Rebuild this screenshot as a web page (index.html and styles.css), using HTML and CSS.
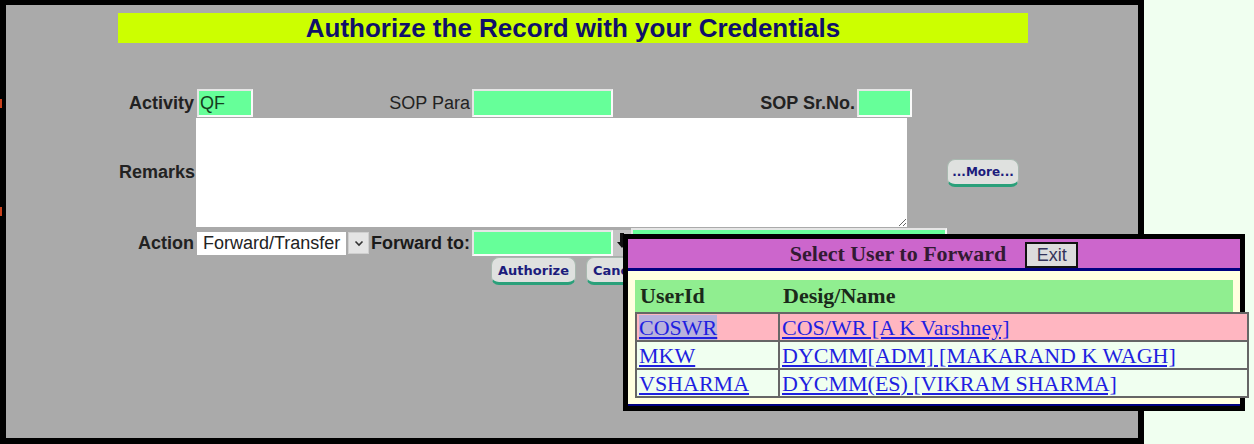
FILE: index.html
```html
<!DOCTYPE html>
<html>
<head>
<meta charset="utf-8">
<link rel="stylesheet" href="styles.css">
</head>
<body>
<div class="panel">
  <div class="title">Authorize the Record with your Credentials</div>
  <div class="form">
    <div class="row row1">
      <label class="lbl lbl-act bold">Activity</label>
      <input class="fld fld-act" type="text" value="QF">
      <label class="lbl lbl-para">SOP Para</label>
      <input class="fld fld-para" type="text">
      <label class="lbl lbl-srno bold">SOP Sr.No.</label>
      <input class="fld fld-srno" type="text">
    </div>
    <div class="row row2">
      <label class="lbl lbl-rem bold">Remarks</label>
      <textarea class="remarks"></textarea>
      <button class="btn btn-more">...More...</button>
    </div>
    <div class="row row3">
      <label class="lbl lbl-action bold">Action</label>
      <div class="select">
        <select class="sel-box"><option>Forward/Transfer</option></select>
        <span class="sel-arrow"><svg width="10" height="7" viewBox="0 0 10 7"><path d="M1.5 1.5 L5 5 L8.5 1.5" fill="none" stroke="#333" stroke-width="1.6"/></svg></span>
      </div>
      <label class="lbl lbl-fwd bold">Forward to:</label>
      <input class="fld fld-fwd" type="text">
      <span class="pick"><svg width="14" height="18" viewBox="0 0 14 18"><path d="M5 1 H9 V10 H12 L7 16 L2 10 H5 Z" fill="#111"/></svg></span>
      <input class="fld fld-fwdname" type="text">
    </div>
    <div class="row row4">
      <button class="btn btn-auth">Authorize</button>
      <button class="btn btn-cancel">Cancel</button>
    </div>
  </div>
</div>
<span class="mark mark1"></span>
<span class="mark mark2"></span>

<div class="popup">
  <div class="pop-hdr">
    <span class="pop-title">Select User to Forward</span>
    <button class="exit">Exit</button>
  </div>
  <div class="pop-body">
    <table class="hdr-table">
      <colgroup><col class="c1"><col></colgroup>
      <tr><th>UserId</th><th>Desig/Name</th></tr>
    </table>
    <table class="users">
      <colgroup><col class="c1"><col></colgroup>
      <tr class="sel-row"><td><a href="#" class="focused">COSWR</a></td><td><a href="#">COS/WR [A K Varshney]</a></td></tr>
      <tr><td><a href="#">MKW</a></td><td><a href="#">DYCMM[ADM] [MAKARAND K WAGH]</a></td></tr>
      <tr><td><a href="#">VSHARMA</a></td><td><a href="#">DYCMM(ES) [VIKRAM SHARMA]</a></td></tr>
    </table>
  </div>
</div>
</body>
</html>
```

FILE: styles.css
```css
html, body {
  margin: 0;
  padding: 0;
}
body {
  background: #f0fff0;
  font-family: "Liberation Sans", Arial, sans-serif;
  position: relative;
  width: 1254px;
  height: 444px;
  overflow: hidden;
}
.panel {
  width: 1144px;
  height: 444px;
  box-sizing: border-box;
  border-style: solid;
  border-color: #000;
  border-width: 5px 6px 6px 6px;
  background: #aaaaaa;
}
.title {
  margin: 8px 0 0 112px;
  width: 910px;
  height: 30px;
  line-height: 31px;
  background: #ccff00;
  color: #10106a;
  font-weight: bold;
  font-size: 26px;
  text-align: center;
}
.form {
  display: flex;
  flex-direction: column;
  margin-top: 46px;
}
.row {
  display: flex;
  align-items: center;
}
.lbl {
  box-sizing: border-box;
  text-align: right;
  font-size: 18px;
  color: #222;
  white-space: nowrap;
}
.bold { font-weight: bold; }
.fld {
  box-sizing: border-box;
  background: #66ff99;
  border: 2px solid #e6e6e6;
  border-right-color: #fafafa;
  border-bottom-color: #fafafa;
  font-family: "Liberation Sans", Arial, sans-serif;
  font-size: 18px;
  color: #143d20;
  padding: 0 0 0 1px;
  margin: 0;
  outline: none;
}
.row1 { height: 28px; }
.lbl-act { width: 191px; padding-right: 3px; }
.fld-act { width: 56px; height: 28px; }
.lbl-para { width: 219px; padding-right: 2px; }
.fld-para { width: 141px; height: 28px; }
.lbl-srno { width: 244px; padding-right: 2px; }
.fld-srno { width: 55px; height: 28px; }

.row2 { margin-top: 1px; }
.lbl-rem { width: 190px; padding-right: 1px; }
.remarks {
  width: 711px;
  height: 109px;
  box-sizing: border-box;
  border: 0;
  margin: 0;
  background: #fff;
  outline: none;
}
.btn {
  box-sizing: border-box;
  font-family: "DejaVu Sans", Verdana, sans-serif;
  font-weight: bold;
  color: #1c1c7c;
  background: #dfe1df;
  border: 1px solid #a9b9b0;
  border-bottom: 3px solid #2aa07a;
  border-radius: 8px;
  padding: 0;
  margin: 0;
}
.btn-more {
  margin-left: 40px;
  width: 72px;
  height: 28px;
  font-size: 12px;
}
.row3 { margin-top: 3px; height: 26px; }
.lbl-action { width: 191px; padding-right: 3px; }
.select {
  display: flex;
  align-items: center;
  width: 172px;
  height: 23px;
}
.sel-box {
  appearance: none;
  -webkit-appearance: none;
  width: 149px;
  height: 23px;
  border: 0;
  border-radius: 0;
  margin: 0;
  background: #fff;
  font-family: "Liberation Sans", Arial, sans-serif;
  font-size: 18px;
  color: #222;
  padding: 0 0 0 6px;
  outline: none;
}
.sel-arrow {
  margin-left: 2px;
  width: 21px;
  height: 22px;
  box-sizing: border-box;
  background: #e4e4e4;
  border: 1px solid #cfcfcf;
  display: flex;
  align-items: center;
  justify-content: center;
}
.lbl-fwd { width: 103px; padding-right: 2px; color: #1a1a1a; }
.fld-fwd { width: 141px; height: 26px; }
.pick {
  width: 18px;
  height: 26px;
  background: #c4c4c4;
  display: flex;
  align-items: flex-start;
  justify-content: center;
  padding-top: 2px;
  box-sizing: border-box;
}
.fld-fwdname { width: 316px; height: 28px; align-self: flex-start; margin-top: -2px; }
.row4 { margin-top: 1px; }
.btn-auth {
  margin-left: 485px;
  padding: 0 6px;
  height: 28px;
  font-size: 13px;
}
.btn-cancel {
  margin-left: 10px;
  padding: 0 6px;
  height: 28px;
  font-size: 13px;
}
.mark {
  position: absolute;
  left: 0;
  width: 2px;
  height: 9px;
  background: #c8401c;
}
.mark1 { top: 99px; }
.mark2 { top: 207px; }

/* popup */
.popup {
  position: absolute;
  left: 623px;
  top: 234px;
  width: 622px;
  height: 177px;
  box-sizing: border-box;
  border: 5px solid #000;
  display: flex;
  flex-direction: column;
  background: #ffffe0;
}
.pop-hdr {
  height: 29px;
  background: #cc66cc;
  border-bottom: 3px solid #000080;
  display: flex;
  align-items: center;
  justify-content: center;
  gap: 19px;
}
.pop-title {
  font-family: "Liberation Serif", "Times New Roman", serif;
  font-weight: bold;
  font-size: 22px;
  color: #331a33;
}
.exit {
  box-sizing: border-box;
  width: 53px;
  height: 26px;
  margin-top: 3px;
  border: 2px solid #111;
  background: #dcdcdc;
  font-family: "Liberation Sans", Arial, sans-serif;
  font-size: 18px;
  color: #33335a;
  padding: 0;
}
.pop-body {
  flex: 1;
  padding: 9px 0 0 7px;
  border-bottom: 2px solid #000080;
}
table {
  border-collapse: collapse;
  table-layout: fixed;
  font-family: "Liberation Serif", "Times New Roman", serif;
}
.c1 { width: 143px; }
.hdr-table {
  width: 598px;
  background: #90ee90;
}
.hdr-table th {
  height: 32px;
  padding: 0 0 0 5px;
  text-align: left;
  font-size: 22px;
  font-weight: bold;
  color: #1a2a1a;
}
.users {
  width: 614px;
}
.users td {
  border: 2px solid #666;
  height: 25px;
  padding: 1px 0 0 2px;
  font-size: 22px;
  line-height: 24px;
  background: #f0fff0;
  white-space: nowrap;
}
.users .sel-row td { background: #ffb6c1; }
.users a {
  color: #1f1fe0;
  text-decoration: underline;
}
.users a.focused {
  background: #b8b2dc;
}
```
